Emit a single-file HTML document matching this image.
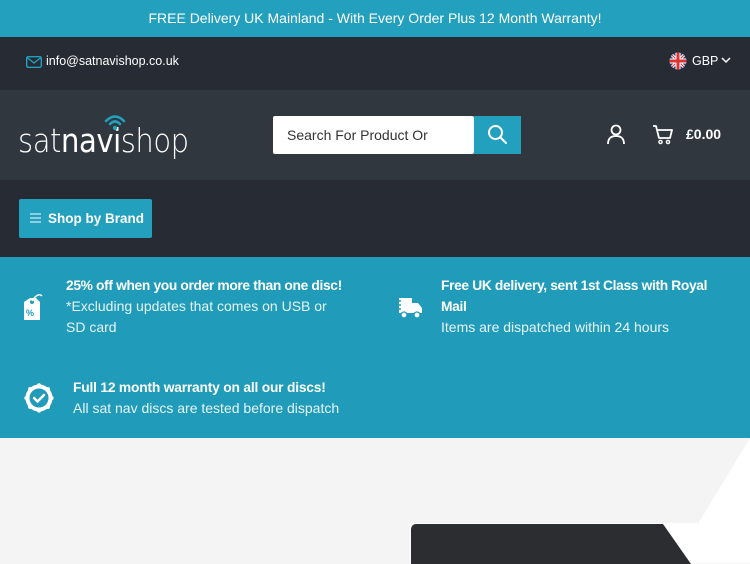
<!DOCTYPE html><html><head><style>
*{margin:0;padding:0;box-sizing:border-box}
body{width:750px;height:563px;overflow:hidden;font-family:"Liberation Sans",sans-serif;background:#f4f4f4;position:relative}
.a{position:absolute}
</style></head><body>
<div class="a" style="left:0;top:0;width:750px;height:37px;background:#22a0be;color:#fff;font-size:14px;text-align:center;line-height:37px">FREE Delivery UK Mainland - With Every Order Plus 12 Month Warranty!</div>
<div class="a" style="left:0;top:37px;width:750px;height:53px;background:#272b33"></div>
<svg class="a" style="left:26px;top:56px" width="16" height="12" viewBox="0 0 16 12"><rect x="0.7" y="0.7" width="14.6" height="10.6" rx="1.5" fill="none" stroke="#22a0be" stroke-width="1.4"/><path d="M1 1.5L8 7L15 1.5" fill="none" stroke="#22a0be" stroke-width="1.4"/></svg>
<div class="a" style="left:46px;top:54px;color:#fff;font-size:12.5px">info@satnavishop.co.uk</div>
<svg class="a" style="left:669px;top:52px" width="18" height="18" viewBox="0 0 18 18"><clipPath id="c"><circle cx="9" cy="9" r="8.5"/></clipPath><g clip-path="url(#c)"><rect width="18" height="18" fill="#2c4a8a"/><path d="M0 0L18 18M18 0L0 18" stroke="#fff" stroke-width="3"/><path d="M0 0L18 18M18 0L0 18" stroke="#d33" stroke-width="1"/><path d="M9 0V18M0 9H18" stroke="#fff" stroke-width="5"/><path d="M9 0V18M0 9H18" stroke="#d33" stroke-width="3"/></g></svg>
<div class="a" style="left:692px;top:54px;color:#fff;font-size:12.5px">GBP</div>
<svg class="a" style="left:721px;top:57px" width="10" height="7"><path d="M1 1L5 5L9 1" fill="none" stroke="#fff" stroke-width="1.5"/></svg>
<div class="a" style="left:0;top:90px;width:750px;height:90px;background:#31373f"></div>
<div class="a" style="left:18px;top:121px;color:#fff;font-size:33px;letter-spacing:-0.5px;font-family:'DejaVu Sans','Liberation Sans',sans-serif;font-weight:300;transform:scaleX(0.88);transform-origin:left">sat<b>navi</b>shop</div>
<svg class="a" style="left:103px;top:114px" width="24" height="16" viewBox="0 0 24 16"><path d="M3 7Q12 -2 21 7M7 10Q12 5 17 10" fill="none" stroke="#22a0be" stroke-width="2.5" stroke-linecap="round"/><circle cx="12" cy="14" r="2.2" fill="#22a0be"/></svg>
<div class="a" style="left:273px;top:116px;width:201px;height:38px;background:#fff;border-radius:2px;font-size:14px;color:#333;padding-left:14px;line-height:38px">Search For Product Or</div>
<div class="a" style="left:474px;top:116px;width:47px;height:38px;background:#22a0be"></div>
<svg class="a" style="left:487px;top:124px" width="21" height="21" viewBox="0 0 21 21"><circle cx="8.5" cy="8.5" r="6.5" fill="none" stroke="#fff" stroke-width="2"/><path d="M13.5 13.5L19 19" stroke="#fff" stroke-width="2" stroke-linecap="round"/></svg>
<svg class="a" style="left:606px;top:124px" width="20" height="21" viewBox="0 0 20 21"><circle cx="10" cy="6" r="4.5" fill="none" stroke="#fff" stroke-width="1.8"/><path d="M2 20Q2 12 10 12Q18 12 18 20" fill="none" stroke="#fff" stroke-width="1.8"/></svg>
<svg class="a" style="left:652px;top:124px" width="22" height="21" viewBox="0 0 22 21"><path d="M1 2H4L7 14H18L20 6H5" fill="none" stroke="#fff" stroke-width="1.8" stroke-linejoin="round"/><circle cx="8.5" cy="18" r="1.6" fill="none" stroke="#fff" stroke-width="1.4"/><circle cx="16" cy="18" r="1.6" fill="none" stroke="#fff" stroke-width="1.4"/></svg>
<div class="a" style="left:686px;top:126px;color:#fff;font-size:14px;font-weight:bold">£0.00</div>
<div class="a" style="left:0;top:180px;width:750px;height:77px;background:#272b33"></div>
<div class="a" style="left:19px;top:199px;width:133px;height:39px;background:#22a0be;border-radius:2px;color:#fff;font-weight:bold;font-size:13.5px;line-height:39px;padding-left:29px">Shop by Brand</div>
<svg class="a" style="left:30px;top:213px" width="11" height="10"><path d="M0 1H11M0 5H11M0 9H11" stroke="#cfeaf1" stroke-width="1.3"/></svg>
<div class="a" style="left:0;top:257px;width:750px;height:181px;background:#209cba;color:#fff;font-size:14px;line-height:21px">
<div class="a" style="left:66px;top:18px;width:300px;white-space:nowrap"><b style="letter-spacing:-0.35px;font-size:13.8px">25% off when you order more than one disc!</b><br><span style="color:#e6f4f8">*Excluding updates that comes on USB or<br>SD card</span></div>
<div class="a" style="left:441px;top:18px;width:300px;white-space:nowrap"><b style="letter-spacing:-0.35px;font-size:13.8px">Free UK delivery, sent 1st Class with Royal<br>Mail</b><br><span style="color:#e6f4f8">Items are dispatched within 24 hours</span></div>
<div class="a" style="left:73px;top:120px;width:320px;white-space:nowrap"><b style="letter-spacing:-0.2px;font-size:13.8px">Full 12 month warranty on all our discs!</b><br><span style="color:#e6f4f8">All sat nav discs are tested before dispatch</span></div>
</div>
<svg class="a" style="left:22px;top:292px" width="22" height="30" viewBox="0 0 22 30"><path d="M2 10L8 6H14L18 10V28H2Z" fill="#fff"/><circle cx="10" cy="10" r="2" fill="#209cba"/><path d="M10 9Q16 0 20 4" fill="none" stroke="#fff" stroke-width="1.5"/><text x="4" y="24" font-size="9" font-weight="bold" fill="#209cba" font-family="Liberation Sans">%</text></svg>
<svg class="a" style="left:393px;top:296px" width="30" height="23" viewBox="0 0 30 23"><path d="M6 2H19V17H6ZM19 7H25L29 12V17H19Z" fill="#fff"/><path d="M0 5H8M2 9H8M0 13H8" stroke="#209cba" stroke-width="1.5"/><circle cx="11" cy="19" r="3" fill="#fff" stroke="#209cba" stroke-width="1.3"/><circle cx="24" cy="19" r="3" fill="#fff" stroke="#209cba" stroke-width="1.3"/></svg>
<svg class="a" style="left:24px;top:383px" width="30" height="30" viewBox="0 0 30 30"><circle cx="15" cy="15" r="11.5" fill="none" stroke="#fff" stroke-width="4"/><g fill="#fff"><circle cx="15" cy="2.5" r="2.2"/><circle cx="15" cy="27.5" r="2.2"/><circle cx="2.5" cy="15" r="2.2"/><circle cx="27.5" cy="15" r="2.2"/><circle cx="6.2" cy="6.2" r="2.2"/><circle cx="23.8" cy="6.2" r="2.2"/><circle cx="6.2" cy="23.8" r="2.2"/><circle cx="23.8" cy="23.8" r="2.2"/></g><path d="M10 15L13.5 18.5L20 12" fill="none" stroke="#fff" stroke-width="2.5" stroke-linecap="round"/></svg>
<div class="a" style="left:697px;top:438px;width:53px;height:125px;background:#fff;clip-path:polygon(100% 0,100% 100%,0 100%,0 70%)"></div>
<div class="a" style="left:410px;top:523px;width:287px;height:40px;background:#fff"></div>
<div class="a" style="left:411px;top:524px;width:280px;height:40px;background:#2b2d31;border-radius:5px 0 0 0;clip-path:polygon(0 0,90% 0,100% 100%,0 100%)"></div>
</body></html>
